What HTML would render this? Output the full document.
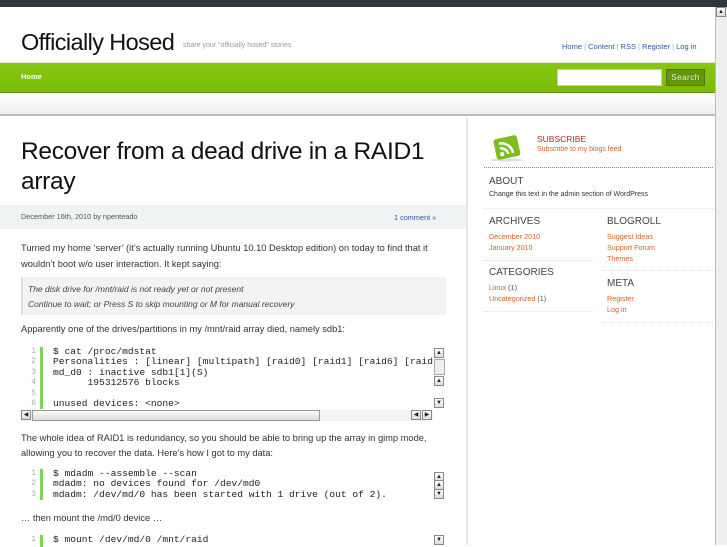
<!DOCTYPE html>
<html><head><meta charset="utf-8"><style>
*{margin:0;padding:0;box-sizing:border-box}
body{width:727px;height:545px;overflow:hidden;background:#fff;font-family:"Liberation Sans",sans-serif;position:relative}
.a{position:absolute}
.sb a{color:#d0602a}
.code{position:absolute;left:40px;border-left:3px solid #7ad55a;font-family:"Liberation Mono",monospace;font-size:9.6px;color:#222;line-height:10.4px;padding-left:10px;white-space:pre}
.ln{position:absolute;font-family:"Liberation Mono",monospace;font-size:8px;color:#aaa;line-height:10.4px;text-align:right;width:14px;left:22px}
.btn{position:absolute;width:10px;height:10px;border:1px solid #888;background:linear-gradient(#fff,#ddd);font-size:6px;line-height:8px;text-align:center;color:#222}
.sep{border-top:1px dotted #ddd}
</style></head><body>
<div class="a" style="left:0;top:0;width:727px;height:7px;background:#2e3640"></div>
<div class="a" style="left:715px;top:7px;width:12px;height:538px;background:#eceeef;border-left:1px solid #bbb"></div>
<div class="btn" style="left:716px;top:7px;width:10px">▲</div>

<div class="a" style="left:21px;top:29px;font-size:23.5px;color:#111;letter-spacing:-0.6px">Officially Hosed</div>
<div class="a" style="left:183px;top:42px;font-size:7px;color:#999">share your "officially hosed" stories</div>
<div class="a" style="left:562px;top:42px;font-size:7.5px;color:#2a5aa8">Home <span style="color:#aaa">|</span> Content <span style="color:#aaa">|</span> RSS <span style="color:#aaa">|</span> Register <span style="color:#aaa">|</span> Log in</div>

<div class="a" style="left:0;top:62px;width:715px;height:31px;background:linear-gradient(#88c614,#79bd06);border-top:1px solid #e6f0d0;border-bottom:1px solid #5e8f10"></div>
<div class="a" style="left:21px;top:72px;font-size:7.5px;font-weight:bold;color:#fff">Home</div>
<div class="a" style="left:557px;top:69px;width:105px;height:17px;background:#fff;border:1px solid #ccc"></div>
<div class="a" style="left:666px;top:69px;width:39px;height:17px;background:#66940a;border:1px solid #4f7a05;color:#e4f0cc;font-size:8px;text-align:center;line-height:15px;letter-spacing:.5px">Search</div>

<div class="a" style="left:0;top:93px;width:715px;height:23px;background:linear-gradient(#fff,#eeeff0);border-bottom:2px solid #b9bcbf"></div>
<div class="a" style="left:466px;top:118px;width:2px;height:427px;background:#e4e6e8"></div>

<div class="a" style="left:21px;top:137px;font-size:24.5px;color:#111;line-height:30px;width:440px;letter-spacing:-0.3px">Recover from a dead drive in a RAID1 array</div>
<div class="a" style="left:0;top:205px;width:466px;height:24px;background:#f0f3f4"></div>
<div class="a" style="left:21px;top:212px;font-size:7.3px;color:#555">December 16th, 2010 by npenteado</div>
<div class="a" style="left:394px;top:213px;font-size:7.3px;color:#2a5aa8">1 comment »</div>
<div class="a" style="left:21px;top:240px;width:426px;font-size:9.3px;color:#333;line-height:16px">Turned my home ‘server’ (it’s actually running Ubuntu 10.10 Desktop edition) on today to find that it wouldn’t boot w/o user interaction. It kept saying:</div>
<div class="a" style="left:21px;top:277px;width:425px;height:38px;background:#f1f3f4;border-left:2px solid #dde0e2"></div>
<div class="a" style="left:28px;top:282px;font-size:8.5px;color:#444;font-style:italic;line-height:15px">The disk drive for /mnt/raid is not ready yet or not present<br>Continue to wait; or Press S to skip mounting or M for manual recovery</div>
<div class="a" style="left:21px;top:324px;font-size:9.3px;color:#333">Apparently one of the drives/partitions in my /mnt/raid array died, namely sdb1:</div>

<div class="ln" style="top:347px">1<br>2<br>3<br>4<br>5<br>6</div>
<div class="code" style="top:347px;height:62px;width:393px;overflow:hidden">$ cat /proc/mdstat
Personalities : [linear] [multipath] [raid0] [raid1] [raid6] [raid5]
md_d0 : inactive sdb1[1](S)
      195312576 blocks

unused devices: &lt;none&gt;</div>
<div class="btn" style="left:434px;top:348px">▲</div>
<div class="a" style="left:434px;top:359px;width:11px;height:16px;background:#eee;border:1px solid #aaa"></div>
<div class="btn" style="left:434px;top:376px">▲</div>
<div class="btn" style="left:434px;top:398px">▼</div>
<div class="a" style="left:21px;top:410px;width:412px;height:11px;background:#f4f4f4"></div>
<div class="btn" style="left:21px;top:410px">◀</div>
<div class="a" style="left:32px;top:410px;width:288px;height:11px;background:linear-gradient(#fafafa,#ddd);border:1px solid #999"></div>
<div class="btn" style="left:411px;top:410px">◀</div>
<div class="btn" style="left:422px;top:410px">▶</div>

<div class="a" style="left:21px;top:431px;width:426px;font-size:9.3px;color:#333;line-height:15px">The whole idea of RAID1 is redundancy, so you should be able to bring up the array in gimp mode, allowing you to recover the data. Here’s how I got to my data:</div>
<div class="ln" style="top:469px">1<br>2<br>3</div>
<div class="code" style="top:469px;height:31px">$ mdadm --assemble --scan
mdadm: no devices found for /dev/md0
mdadm: /dev/md/0 has been started with 1 drive (out of 2).</div>
<div class="btn" style="left:434px;top:472px">▲</div>
<div class="btn" style="left:434px;top:480px">▲</div>
<div class="btn" style="left:434px;top:489px">▼</div>
<div class="a" style="left:21px;top:513px;font-size:9.3px;color:#333">… then mount the /md/0 device …</div>
<div class="ln" style="top:535px">1</div>
<div class="code" style="top:535px;height:12px">$ mount /dev/md/0 /mnt/raid</div>
<div class="btn" style="left:434px;top:535px">▼</div>

<svg class="a" style="left:490px;top:134px" width="36" height="28" viewBox="0 0 36 28"><ellipse cx="17" cy="26" rx="16" ry="1.5" fill="#ddd"/><g transform="rotate(-12 17 14)"><rect x="5" y="3" width="24" height="21" rx="3" fill="#7cbf1c"/><circle cx="11" cy="19" r="2.2" fill="#fff"/><path d="M10 13a7 7 0 0 1 7 7M10 8a12 12 0 0 1 12 12" stroke="#fff" stroke-width="2.5" fill="none"/></g></svg>
<div class="a" style="left:537px;top:134px;font-size:8.5px;color:#a0322a">SUBSCRIBE</div>
<div class="a" style="left:537px;top:146px;font-size:7px;color:#d0602a">Subscribe to my blogs feed</div>
<div class="a" style="left:484px;top:167px;width:229px;border-top:1px dotted #888"></div>
<div class="a" style="left:489px;top:176px;font-size:10px;color:#444">ABOUT</div>
<div class="a" style="left:489px;top:191px;font-size:7px;color:#333">Change this text in the admin section of WordPress</div>
<div class="a sep" style="left:484px;top:208px;width:229px"></div>
<div class="a sb" style="left:489px;top:216px;font-size:7.2px;line-height:11px;color:#555"><div style="font-size:10px;color:#444;margin-bottom:4px">ARCHIVES</div><a>December 2010</a><br><a>January 2010</a></div>
<div class="a sep" style="left:484px;top:260px;width:110px"></div>
<div class="a sb" style="left:489px;top:267px;font-size:7.2px;line-height:11px;color:#555"><div style="font-size:10px;color:#444;margin-bottom:4px">CATEGORIES</div><a>Linux</a> (1)<br><a>Uncategorized</a> (1)</div>
<div class="a sep" style="left:484px;top:311px;width:110px"></div>
<div class="a sb" style="left:607px;top:216px;font-size:7.2px;line-height:11px;color:#555"><div style="font-size:10px;color:#444;margin-bottom:4px">BLOGROLL</div><a>Suggest Ideas</a><br><a>Support Forum</a><br><a>Themes</a></div>
<div class="a sep" style="left:602px;top:270px;width:111px"></div>
<div class="a sb" style="left:607px;top:278px;font-size:7.2px;line-height:11px;color:#555"><div style="font-size:10px;color:#444;margin-bottom:4px">META</div><a>Register</a><br><a>Log in</a></div>
<div class="a sep" style="left:602px;top:322px;width:111px"></div>
</body></html>
